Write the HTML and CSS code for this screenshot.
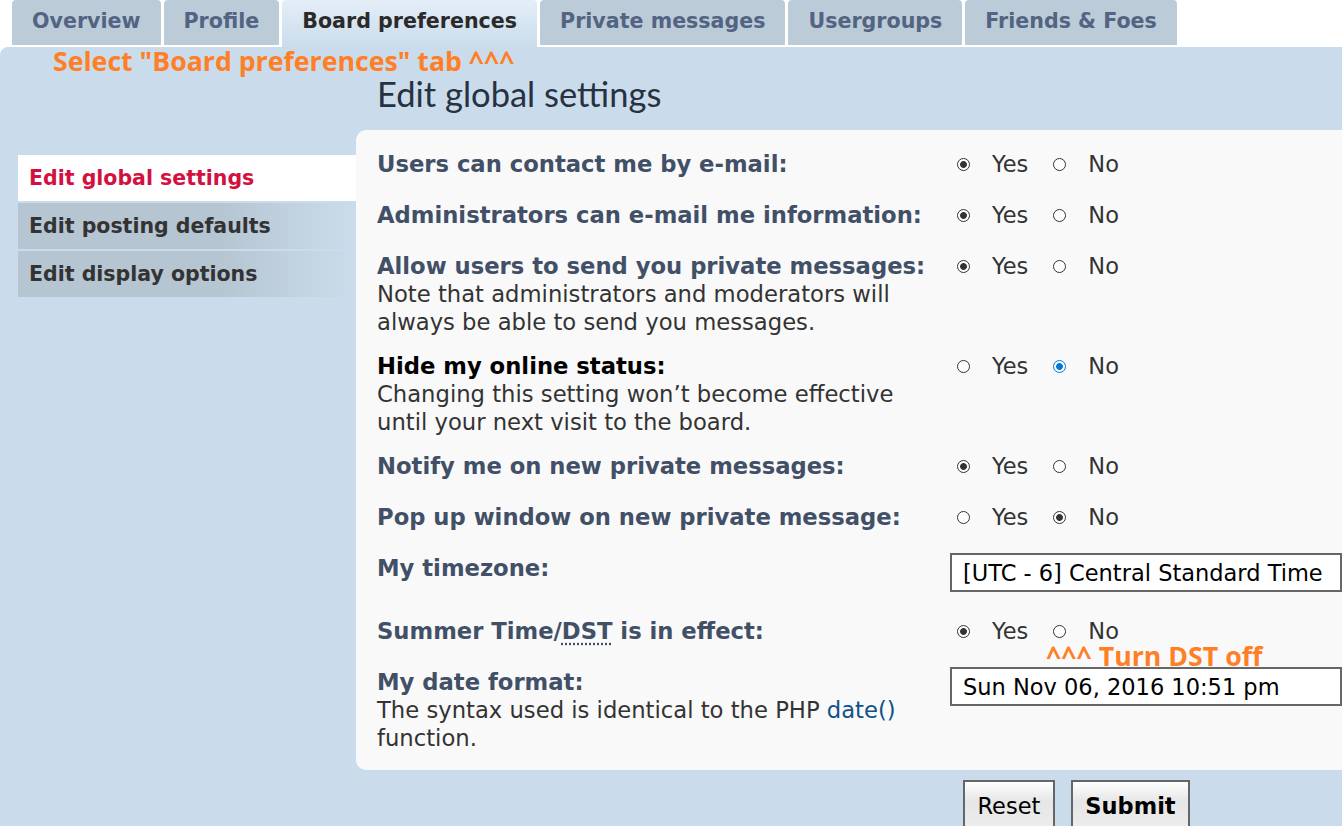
FILE: index.html
```html
<!DOCTYPE html>
<html lang="en">
  <head>
    <meta charset="UTF-8" />
    <title>User Control Panel - Board preferences</title>
    <link rel="stylesheet" href="styles.css">
  </head>
  <body>
    <div class="tabs">
      <a class="tab" href="#">Overview</a>
      <a class="tab" href="#">Profile</a>
      <a class="tab active" href="#">Board preferences</a>
      <a class="tab" href="#">Private messages</a>
      <a class="tab" href="#">Usergroups</a>
      <a class="tab" href="#">Friends &amp; Foes</a>
    </div>

    <div class="main">
      <div class="note note-tab">Select "Board preferences" tab ^^^</div>

      <ul class="menu">
        <li class="menu-item active"><a href="#">Edit global settings</a></li>
        <li class="menu-item"><a href="#">Edit posting defaults</a></li>
        <li class="menu-item"><a href="#">Edit display options</a></li>
      </ul>

      <div class="content">
        <h2>Edit global settings</h2>

        <div class="panel">
          <div class="row">
            <div class="term"><label class="label">Users can contact me by e-mail:</label></div>
            <div class="field">
              <label class="choice"><input type="radio" class="radio" name="viewemail" checked /> Yes</label>
              <label class="choice"><input type="radio" class="radio" name="viewemail" /> No</label>
            </div>
          </div>

          <div class="row">
            <div class="term"><label class="label">Administrators can e-mail me information:</label></div>
            <div class="field">
              <label class="choice"><input type="radio" class="radio" name="massemail" checked /> Yes</label>
              <label class="choice"><input type="radio" class="radio" name="massemail" /> No</label>
            </div>
          </div>

          <div class="row">
            <div class="term">
              <label class="label">Allow users to send you private messages:</label><br />
              <span class="explain">Note that administrators and moderators will always be able to send you messages.</span>
            </div>
            <div class="field">
              <label class="choice"><input type="radio" class="radio" name="allowpm" checked /> Yes</label>
              <label class="choice"><input type="radio" class="radio" name="allowpm" /> No</label>
            </div>
          </div>

          <div class="row">
            <div class="term">
              <label class="label hover">Hide my online status:</label><br />
              <span class="explain">Changing this setting won’t become effective until your next visit to the board.</span>
            </div>
            <div class="field">
              <label class="choice"><input type="radio" class="radio" name="hideonline" /> Yes</label>
              <label class="choice"><input type="radio" class="radio focus" name="hideonline" checked /> No</label>
            </div>
          </div>

          <div class="row">
            <div class="term"><label class="label">Notify me on new private messages:</label></div>
            <div class="field">
              <label class="choice"><input type="radio" class="radio" name="notifypm" checked /> Yes</label>
              <label class="choice"><input type="radio" class="radio" name="notifypm" /> No</label>
            </div>
          </div>

          <div class="row">
            <div class="term"><label class="label">Pop up window on new private message:</label></div>
            <div class="field">
              <label class="choice"><input type="radio" class="radio" name="popuppm" /> Yes</label>
              <label class="choice"><input type="radio" class="radio" name="popuppm" checked /> No</label>
            </div>
          </div>

          <div class="row">
            <div class="term"><label class="label">My timezone:</label></div>
            <div class="field field-box">
              <select class="box">
                <option>[UTC - 6] Central Standard Time</option>
              </select>
            </div>
          </div>

          <div class="row">
            <div class="term"><label class="label">Summer Time/<abbr title="Daylight Saving Time">DST</abbr> is in effect:</label></div>
            <div class="field">
              <label class="choice"><input type="radio" class="radio" name="dst" checked /> Yes</label>
              <label class="choice"><input type="radio" class="radio" name="dst" /> No</label>
              <div class="note note-dst">^^^ Turn DST off</div>
            </div>
          </div>

          <div class="row">
            <div class="term">
              <label class="label">My date format:</label><br />
              <span class="explain">The syntax used is identical to the PHP <a href="#">date()</a> function.</span>
            </div>
            <div class="field field-box">
              <input type="text" class="box" value="Sun Nov 06, 2016 10:51 pm" />
            </div>
          </div>
        </div>

        <div class="buttons">
          <input type="reset" class="button" value="Reset" />
          <input type="submit" class="button button-main" value="Submit" />
        </div>
      </div>
    </div>
  </body>
</html>
```

FILE: styles.css
```css
html {
  overflow: hidden;
}

body {
  font-family: "DejaVu Sans", Verdana, sans-serif;
  margin: 0;
  padding: 0;
  background: #fff;
  color: #333;
}

a {
  text-decoration: none;
}

.tabs {
  display: flex;
  align-items: flex-start;
  gap: 3px;
  height: 47px;
  padding-left: 12px;
}

.tab {
  height: 45px;
  line-height: 42px;
  padding: 0 20px;
  font-size: 20.6px;
  font-weight: bold;
  color: #536482;
  background-color: #bbcbd8;
  border-radius: 4px 4px 0 0;
}

.tab.active {
  height: 47px;
  color: #2a2a2a;
  background: linear-gradient(#e4eef9, #cadceb);
}

.main {
  position: relative;
  display: flex;
  align-items: flex-start;
  padding-left: 18px;
  background-color: #cadceb;
  border-radius: 8px 0 0 0;
  min-height: 800px;
}

.note {
  position: absolute;
  font-family: "Open Sans", Lato, sans-serif;
  font-weight: bold;
  font-size: 26.7px;
  color: #ff7f27;
  white-space: nowrap;
}

.note-tab {
  top: 0;
  left: 53px;
  line-height: 28px;
}

.note-dst {
  top: 28px;
  left: 96px;
  line-height: 22px;
}

.menu {
  flex-shrink: 0;
  list-style: none;
  width: 338px;
  margin: 108px 0 0;
  padding: 0;
}

.menu-item {
  height: 46px;
  margin-bottom: 2px;
  background: linear-gradient(to right, #b6c5d2 60%, #cadceb);
}

.menu-item a {
  display: block;
  padding-left: 11px;
  line-height: 46px;
  font-size: 20.5px;
  font-weight: bold;
  color: #333;
  white-space: nowrap;
}

.menu-item.active {
  background: #fff;
}

.menu-item.active a {
  color: #d31141;
}

.content {
  flex: 1;
  min-width: 0;
  overflow: hidden;
}

h2 {
  font-family: Lato, "Open Sans", sans-serif;
  font-weight: normal;
  font-size: 34.5px;
  line-height: 36px;
  color: #28313f;
  margin: 29px 0 18px 21px;
}

.panel {
  background-color: #f9f9f9;
  border-radius: 10px 0 0 10px;
  padding: 20px 0 18px 21px;
}

.row {
  display: flex;
  margin-bottom: 16px;
}

.row:last-child {
  margin-bottom: 0;
}

.term {
  width: 573px;
  flex-shrink: 0;
  font-size: 22.7px;
  line-height: 28px;
}

.label {
  font-weight: bold;
  color: #425067;
}

.label.hover {
  color: #000;
}

abbr {
  text-decoration: underline dotted;
  text-underline-offset: 4px;
}

.explain {
  display: inline-block;
  max-width: 540px;
  color: #333;
}

.explain a {
  color: #105289;
}

.field {
  position: relative;
  display: flex;
  align-items: flex-start;
  min-width: 0;
  min-height: 35px;
  font-size: 22.5px;
  line-height: 28px;
}

.field-box {
  min-height: 47px;
}

.choice {
  display: flex;
  align-items: center;
  gap: 22px;
  height: 28px;
  margin: 0 18px 0 7px;
  color: #333;
}

.radio {
  appearance: none;
  width: 13px;
  height: 13px;
  margin: 0;
  border: 1px solid #333;
  border-radius: 50%;
  background: #fff;
}

.radio:checked {
  background: radial-gradient(circle, #333 0 3px, #fff 3.8px);
}

.radio.focus {
  border-color: #0078d7;
}

.radio.focus:checked {
  background: radial-gradient(circle, #0078d7 0 3px, #fff 3.8px);
}

.box {
  appearance: none;
  box-sizing: border-box;
  width: 400px;
  height: 39px;
  margin: -1px 0 0;
  padding: 0 11px;
  border: 2px solid #666;
  border-radius: 0;
  background: #fff;
  font-family: "DejaVu Sans", Verdana, sans-serif;
  font-size: 22.5px;
  color: #000;
}

.buttons {
  display: flex;
  gap: 16px;
  margin-top: 10px;
  padding-left: 607px;
}

.button {
  height: 52px;
  padding: 0 12.5px;
  border: 2px solid #666;
  background: linear-gradient(#fff, #e6e6e6 40%, #ededed);
  font-family: "DejaVu Sans", Verdana, sans-serif;
  font-size: 22.5px;
  color: #000;
}

.button-main {
  font-weight: bold;
}
```
